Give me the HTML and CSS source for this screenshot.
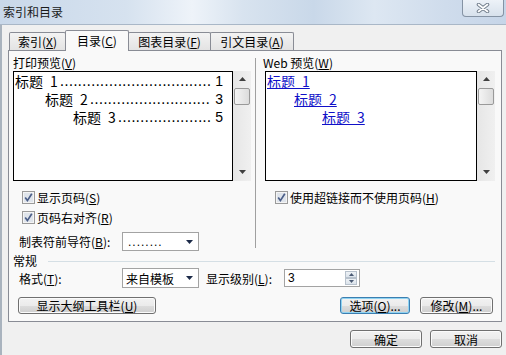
FILE: index.html
```html
<!DOCTYPE html>
<html lang="zh-CN">
<head>
    <meta charset="UTF-8">
    <title>索引和目录</title>
    <link rel="stylesheet" href="styles.css">
</head>
<body>

<div class="titlebar">
    <span class="title">索引和目录</span>
    <div class="close">
        <svg width="14" height="10" viewBox="0 0 14 10">
            <path d="M2.5 1.5 L11.5 8.5 M11.5 1.5 L2.5 8.5" stroke="#75818f" stroke-width="3.6" stroke-linecap="round" fill="none"/>
            <path d="M2.5 1.5 L11.5 8.5 M11.5 1.5 L2.5 8.5" stroke="#ffffff" stroke-width="1.6" stroke-linecap="round" fill="none"/>
        </svg>
    </div>
</div>

<div class="client">
    <div class="tabs">
        <div class="tab t1">索引(<u>X</u>)</div>
        <div class="tab t2 active">目录(<u>C</u>)</div>
        <div class="tab t3">图表目录(<u>F</u>)</div>
        <div class="tab t4">引文目录(<u>A</u>)</div>
    </div>

    <div class="panel">
        <div class="previews">
            <div class="col-print">
                <div class="caption">打印预览(<u>V</u>)</div>
                <div class="preview">
                    <div class="listbox print-box">
                        <div class="toc-line lvl1"><span>标题&ensp;1</span><span class="dots">..................................</span><span class="num">1</span></div>
                        <div class="toc-line lvl2"><span>标题&ensp;2</span><span class="dots">...........................</span><span class="num">3</span></div>
                        <div class="toc-line lvl3"><span>标题&ensp;3</span><span class="dots">.....................</span><span class="num">5</span></div>
                    </div>
                    <div class="vscroll">
                        <svg class="arr-up" width="7" height="4" viewBox="0 0 7 4"><path d="M0 4 H7 L3.5 0 Z" fill="#404040"/></svg>
                        <div class="thumb"></div>
                        <div class="track"></div>
                        <svg class="arr-down" width="7" height="4" viewBox="0 0 7 4"><path d="M0 0 H7 L3.5 4 Z" fill="#404040"/></svg>
                    </div>
                </div>
                <div class="check first">
                    <svg class="cb" width="13" height="13" viewBox="0 0 13 13">
                        <rect x="0.5" y="0.5" width="12" height="12" fill="#f4f4f4" stroke="#9a9a9a"/>
                        <rect x="2" y="2" width="9" height="9" fill="#dfe4eb"/>
                        <path d="M3.2 6.6 L5.4 9.6 L9.8 2.8" stroke="#4b5e88" stroke-width="1.7" fill="none"/>
                    </svg>
                    <span>显示页码(<u>S</u>)</span>
                </div>
                <div class="check">
                    <svg class="cb" width="13" height="13" viewBox="0 0 13 13">
                        <rect x="0.5" y="0.5" width="12" height="12" fill="#f4f4f4" stroke="#9a9a9a"/>
                        <rect x="2" y="2" width="9" height="9" fill="#dfe4eb"/>
                        <path d="M3.2 6.6 L5.4 9.6 L9.8 2.8" stroke="#4b5e88" stroke-width="1.7" fill="none"/>
                    </svg>
                    <span>页码右对齐(<u>R</u>)</span>
                </div>
                <div class="field-row leader-row">
                    <span class="field-label">制表符前导符(<u>B</u>):</span>
                    <div class="combo">
                        <span class="leader">........</span>
                        <svg width="7" height="4" viewBox="0 0 7 4"><path d="M0 0 H7 L3.5 4 Z" fill="#1c2a48"/></svg>
                    </div>
                </div>
            </div>

            <div class="divider"></div>

            <div class="col-web">
                <div class="caption">Web 预览(<u>W</u>)</div>
                <div class="preview">
                    <div class="listbox web-box">
                        <div class="web-line lvl1"><a>标题&ensp;1</a></div>
                        <div class="web-line lvl2"><a>标题&ensp;2</a></div>
                        <div class="web-line lvl3"><a>标题&ensp;3</a></div>
                    </div>
                    <div class="vscroll">
                        <svg class="arr-up" width="7" height="4" viewBox="0 0 7 4"><path d="M0 4 H7 L3.5 0 Z" fill="#404040"/></svg>
                        <div class="thumb"></div>
                        <div class="track"></div>
                        <svg class="arr-down" width="7" height="4" viewBox="0 0 7 4"><path d="M0 0 H7 L3.5 4 Z" fill="#404040"/></svg>
                    </div>
                </div>
                <div class="check first web-check">
                    <svg class="cb" width="13" height="13" viewBox="0 0 13 13">
                        <rect x="0.5" y="0.5" width="12" height="12" fill="#f4f4f4" stroke="#9a9a9a"/>
                        <rect x="2" y="2" width="9" height="9" fill="#dfe4eb"/>
                        <path d="M3.2 6.6 L5.4 9.6 L9.8 2.8" stroke="#4b5e88" stroke-width="1.7" fill="none"/>
                    </svg>
                    <span>使用超链接而不使用页码(<u>H</u>)</span>
                </div>
            </div>
        </div>

        <div class="group-title">
            <span>常规</span>
            <span class="rule"></span>
        </div>

        <div class="format-row">
            <span class="field-label">格式(<u>T</u>):</span>
            <div class="combo format-combo">
                <span>来自模板</span>
                <svg width="7" height="4" viewBox="0 0 7 4"><path d="M0 0 H7 L3.5 4 Z" fill="#1c2a48"/></svg>
            </div>
            <span class="level-label">显示级别(<u>L</u>):</span>
            <div class="spin">
                <span>3</span>
                <div class="spin-btns">
                    <div class="spin-btn"><svg width="5" height="3" viewBox="0 0 5 3"><path d="M0 3 H5 L2.5 0 Z" fill="#4a5a74"/></svg></div>
                    <div class="spin-btn"><svg width="5" height="3" viewBox="0 0 5 3"><path d="M0 0 H5 L2.5 3 Z" fill="#4a5a74"/></svg></div>
                </div>
            </div>
        </div>

        <div class="button-row">
            <div class="btn btn-outline">显示大纲工具栏(<u>U</u>)</div>
            <div class="btn btn-options focus">选项(<u>O</u>)...</div>
            <div class="btn btn-modify">修改(<u>M</u>)...</div>
        </div>
    </div>

    <div class="dialog-buttons">
        <div class="btn btn-dialog">确定</div>
        <div class="btn btn-dialog">取消</div>
    </div>
</div>

</body>
</html>
```

FILE: styles.css
```css
* {
    box-sizing: border-box;
}
body {
    margin: 0;
    width: 506px;
    height: 355px;
    overflow: hidden;
    background-color: #f0f0f0;
    font-family: "Noto Sans CJK SC", "DejaVu Sans", sans-serif;
    font-size: 12px;
    color: #000;
}
u {
    text-decoration: underline;
    text-underline-offset: 1px;
}

/* title bar */
.titlebar {
    height: 25px;
    display: flex;
    justify-content: space-between;
    padding-left: 3px;
    border-bottom: 1px solid #a9b7c7;
    background: linear-gradient(90deg, #c9d8ea 0%, #d6e2ef 25%, #eef3f9 38%, #d8e3ef 48%, #c9d8e9 62%, #dde7f2 74%, #cfdcec 88%, #c6d5e8 100%);
}
.title {
    line-height: 24px;
    color: #1a1a1a;
}
.close {
    width: 42px;
    height: 17px;
    margin-right: 2px;
    border: 1px solid #8593a4;
    border-top: none;
    border-radius: 0 0 4px 4px;
    background: linear-gradient(#edf2f8, #d7e1ec);
    display: flex;
    align-items: center;
    justify-content: center;
}

/* client */
.client {
    height: 330px;
    border-left: 2px solid #a9b3be;
    padding: 5px 4px 0 6px;
}

.tabs {
    display: flex;
    align-items: flex-end;
    height: 20px;
    padding-left: 1px;
}
.tab {
    height: 18px;
    margin-left: -1px;
    border: 1px solid #898c95;
    border-bottom: none;
    border-radius: 2px 2px 0 0;
    background: linear-gradient(#f3f3f3, #e3e3e3);
    display: flex;
    align-items: center;
    justify-content: center;
}
.tab.t1 { width: 57px; margin-left: 0; }
.tab.t2 { width: 64px; }
.tab.t3 { width: 83px; }
.tab.t4 { width: 84px; }
.tab.active {
    height: 21px;
    margin-bottom: -1px;
    padding-bottom: 2px;
    background: #f9f9f9;
    position: relative;
    z-index: 1;
}

.panel {
    width: 494px;
    height: 272px;
    border: 1px solid #898c95;
    background-color: #f9f9f9;
    padding: 0 6px 0 4px;
}

.previews {
    display: flex;
    height: 200px;
}
.col-print {
    width: 238px;
}
.divider {
    width: 1px;
    height: 190px;
    margin: 7px 0 0 4px;
    background-color: #a0a0a0;
}
.col-web {
    flex: 1;
    margin-left: 7px;
}
.caption {
    margin-top: 4px;
    height: 16px;
    line-height: 16px;
}
.preview {
    display: flex;
    height: 110px;
}
.listbox {
    border: 1px solid #000;
    background-color: #fff;
    font-size: 14px;
}
.print-box {
    width: 220px;
}
.web-box {
    width: 212px;
    margin-left: 2px;
}
.toc-line {
    display: flex;
    align-items: center;
    height: 18px;
    line-height: 18px;
    white-space: nowrap;
    padding-right: 9px;
}
.dots {
    margin-left: 2px;
    font-family: "DejaVu Sans", sans-serif;
    font-size: 14px;
    line-height: 16px;
}
.num {
    margin-left: auto;
    font-family: "Liberation Sans", sans-serif;
    line-height: 16px;
}
.lvl1 { padding-left: 1px; }
.lvl2 { padding-left: 31px; }
.lvl3 { padding-left: 59px; }
.web-line {
    height: 18px;
    line-height: 18px;
    white-space: nowrap;
}
.web-line.lvl1 { padding-left: 1px; }
.web-line.lvl2 { padding-left: 28px; }
.web-line.lvl3 { padding-left: 56px; }
.web-line a {
    color: #1010c8;
    text-decoration: underline;
}

.vscroll {
    width: 18px;
    display: flex;
    flex-direction: column;
    align-items: center;
    background: linear-gradient(90deg, #e6e6e6, #f0f0f0);
}
.arr-up {
    margin-top: 6px;
}
.thumb {
    width: 16px;
    height: 17px;
    margin-top: 7px;
    border: 1px solid #999;
    border-radius: 2px;
    background: linear-gradient(90deg, #f4f4f4, #dcdcdc);
}
.track {
    flex: 1;
}
.arr-down {
    margin-bottom: 7px;
}

.check {
    display: flex;
    align-items: center;
    height: 20px;
    margin-left: 9px;
}
.check.first {
    margin-top: 6px;
}
.web-check {
    margin-left: 12px;
}
.cb {
    margin-right: 2px;
    flex-shrink: 0;
}

.field-row {
    display: flex;
    align-items: center;
    height: 19px;
    margin-top: 5px;
    padding-left: 6px;
}
.field-label {
    width: 103px;
}
.combo {
    width: 77px;
    height: 19px;
    border: 1px solid #a3a3a3;
    background-color: #fff;
    display: flex;
    align-items: center;
    justify-content: space-between;
    padding: 0 5px 0 5px;
}
.leader {
    letter-spacing: 1px;
    font-family: "Liberation Sans", sans-serif;
}

.group-title {
    display: flex;
    align-items: center;
    height: 15px;
    margin-top: 2px;
}
.rule {
    flex: 1;
    height: 1px;
    margin: 1px 0 0 11px;
    background-color: #d5dfe5;
}

.format-row {
    display: flex;
    align-items: center;
    height: 20px;
    padding-left: 6px;
}
.format-combo {
    height: 20px;
    padding-left: 3px;
}
.level-label {
    width: 78px;
    margin-left: 7px;
}
.spin {
    width: 76px;
    height: 18px;
    border: 1px solid #a3a3a3;
    background-color: #fff;
    display: flex;
    align-items: center;
    justify-content: space-between;
    padding: 0 2px 0 3px;
    font-family: "Liberation Sans", sans-serif;
}
.spin-btns {
    display: flex;
    flex-direction: column;
}
.spin-btn {
    width: 12px;
    height: 7px;
    border: 1px solid #b7c1cc;
    background: linear-gradient(#eef2f6, #dbe3eb);
    display: flex;
    align-items: center;
    justify-content: center;
}

.button-row {
    display: flex;
    height: 17px;
    margin-top: 9px;
    padding: 0 2px 0 5px;
}
.btn {
    height: 17px;
    border: 1px solid #707070;
    border-radius: 3px;
    background: linear-gradient(#f2f2f2 0%, #ebebeb 50%, #dddddd 51%, #cfcfcf 100%);
    box-shadow: inset 0 0 0 1px #fbfbfb;
    display: flex;
    align-items: center;
    justify-content: center;
}
.btn-outline {
    width: 138px;
}
.btn-options {
    width: 70px;
    margin-left: auto;
}
.btn-modify {
    width: 73px;
    margin-left: 10px;
}
.btn.focus {
    border-color: #3c7fb1;
    box-shadow: inset 0 0 0 1px #8fd3f2;
}

.dialog-buttons {
    display: flex;
    justify-content: flex-end;
    gap: 8px;
    margin-top: 8px;
}
.btn-dialog {
    width: 72px;
    height: 18px;
}
```
